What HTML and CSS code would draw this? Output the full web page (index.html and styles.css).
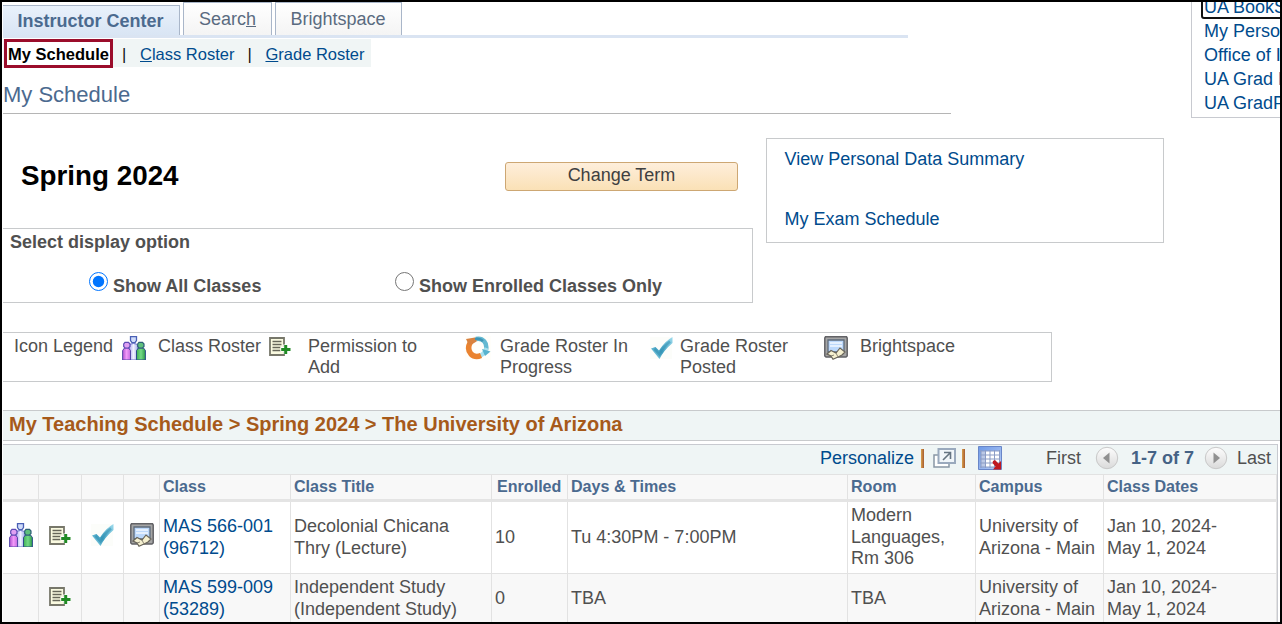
FILE: index.html
```html
<!DOCTYPE html>
<html lang="en">
<head>
    <meta charset="UTF-8">
    <meta name="viewport" content="width=device-width, initial-scale=1.0">
    <title>My Schedule</title>
    <link rel="stylesheet" href="styles.css">
</head>
<body>

<!-- Icon definitions -->
<svg class="defs" width="0" height="0">
    <defs>
        <linearGradient id="pink"><stop offset="0" stop-color="#b04fd0"/><stop offset=".5" stop-color="#f29af8"/><stop offset="1" stop-color="#c468e0"/></linearGradient>
        <linearGradient id="green"><stop offset="0" stop-color="#3fae55"/><stop offset=".5" stop-color="#74da86"/><stop offset="1" stop-color="#2d9a48"/></linearGradient>
        <linearGradient id="lilac"><stop offset="0" stop-color="#a9a4ee"/><stop offset=".5" stop-color="#f0f2ff"/><stop offset="1" stop-color="#a3abea"/></linearGradient>
        <linearGradient id="tick" x1="0" y1="1" x2="1" y2="0"><stop offset="0" stop-color="#9bdcee"/><stop offset=".4" stop-color="#3f9fc0"/><stop offset="1" stop-color="#9fdcee"/></linearGradient>
        <linearGradient id="gridfill" x1="0" y1="0" x2="1" y2="1"><stop offset="0" stop-color="#6e9ae8"/><stop offset="1" stop-color="#b9cdf5"/></linearGradient>
        <linearGradient id="ball" x1="0" y1="0" x2="0" y2="1"><stop offset="0" stop-color="#fdfdfd"/><stop offset="1" stop-color="#dadada"/></linearGradient>
    </defs>
    <symbol id="roster" viewBox="0 0 24 24">
        <path d="M7 24V10Q7.500 7.500 11.500 7.500Q15.500 7.500 16 10V24Z" fill="url(#lilac)" stroke="#6a72cc"/>
        <path d="M8.500 .6H14.500V4.500L13 6.700H10L8.500 4.500Z" fill="#d0dcfa" stroke="#4a60b5" stroke-width="1.300"/>
        <path d="M.6 24V14.500L2.500 12H6.500L8.500 14.500V24Z" fill="url(#pink)" stroke="#5548a8"/>
        <path d="M3 6.300H6.500L8 8V10.500L6.500 12H3L1.700 10.500V8Z" fill="#dfa0f2" stroke="#5e4bb5" stroke-width="1.200"/>
        <path d="M14.500 24V14.500L16.500 12H21.500L23.400 14.500V24Z" fill="url(#green)" stroke="#2c4d8b"/>
        <path d="M17 6.300H20.500L22 8V10.500L20.500 12H17L15.700 10.500V8Z" fill="#5fc07c" stroke="#2e5f77" stroke-width="1.200"/>
    </symbol>
    <symbol id="permission" viewBox="0 0 22 19">
        <path d="M1 1H15V18H1Z" fill="#fafae0" stroke="#77776a" stroke-width="1.800"/>
        <path d="M3.500 4.500H12.500M3.500 7.500H12.500M3.500 10.500H11.500M3.500 13.500H11.500" stroke="#666659" stroke-width="1.500"/>
        <path d="M16.500 7.500V17M11.500 12.200H21.500" stroke="#fff" stroke-width="4.500"/>
        <path d="M16.700 8V17M12.200 12.500H21.500" stroke="#218a25" stroke-width="3"/>
    </symbol>
    <symbol id="progress" viewBox="0 0 26 24">
        <path d="M0 0H26V24H0Z" fill="#fffefa"/>
        <path d="M11 3C18 1.500 22.500 7 21 14" fill="none" stroke="#64b9d2" stroke-width="4.500"/>
        <path d="M21.500 12Q19 19.500 12.500 20.500" fill="none" stroke="#a6e0ee" stroke-width="4"/>
        <path d="M17 13L25.500 15.500L20 20Z" fill="#58b3ce"/>
        <path d="M5.500 6Q1.500 13 6 18Q10 22 16 19.500" fill="none" stroke="#ea8330" stroke-width="5.500"/>
        <path d="M1 3L10 1.500Q12.500 2 11.500 5.500L7.500 8L4 9Z" fill="#d9823f"/>
        <path d="M10 3Q15 2 18 5" fill="none" stroke="#3f95b5" stroke-width="2.500"/>
    </symbol>
    <symbol id="posted" viewBox="0 0 24 24">
        <path d="M0 1H22V23H0Z" fill="#fcfdfa"/>
        <path d="M1 12.500L5.500 11L9 14.500Q15 5 22.500 1V7Q14 14 9.500 23Z" fill="url(#tick)"/>
        <path d="M4.500 13L9.500 18.500Q13 11 20 5.500" fill="none" stroke="#2d8bad" stroke-width="2.500" opacity=".5"/>
    </symbol>
    <symbol id="bright" viewBox="0 0 24 24">
        <path d="M1.500 .8H22.500L23.200 2V20L22 21H2L.8 20V2Z" fill="#a5a5a5" stroke="#626266" stroke-width="1.500"/>
        <path d="M4 4H20V16H4Z" fill="#bcd8fb" stroke="#5d6b7b" stroke-width="1.300"/>
        <path d="M6 7H18M6 10H18" stroke="#f2f8ff" stroke-width="1.500"/>
        <path d="M3 18L7 14.500L12 17L16 12L21 16L18 19L14 21L9 23.200L7 20Z" fill="#f5f0d0" stroke="#68645a" stroke-width="1.200"/>
        <path d="M12 17L14 21M7 20L10 19" stroke="#8c8776" fill="none"/>
    </symbol>
    <symbol id="prev" viewBox="0 0 24 24">
        <circle cx="12" cy="12" r="10.700" fill="url(#ball)" stroke="#c8c8c8"/>
        <path d="M14.500 6.500V17.500L8 12Z" fill="#909090"/>
    </symbol>
    <symbol id="next" viewBox="0 0 24 24">
        <circle cx="12" cy="12" r="10.700" fill="url(#ball)" stroke="#c8c8c8"/>
        <path d="M9.500 6.500V17.500L16 12Z" fill="#909090"/>
    </symbol>
</svg>

<div class="page">
    <div class="top">
        <div class="top-left">
            <div class="tabs">
                <div class="tab active">Instructor Center</div>
                <div class="tab search">Searc<u>h</u></div>
                <div class="tab bspace">Brightspace</div>
            </div>
            <div class="subnav">
                <span class="current">My Schedule</span>
                <span class="sep">|</span>
                <a><u>C</u>lass Roster</a>
                <span class="sep">|</span>
                <a><u>G</u>rade Roster</a>
            </div>
            <h1>My Schedule</h1>
        </div>
        <div class="links">
            <a class="focused">UA BookS</a>
            <a>My Perso</a>
            <a>Office of I</a>
            <a>UA Grad P</a>
            <a>UA GradP</a>
        </div>
    </div>

    <div class="middle">
        <div class="term-area">
            <div class="term-row">
                <h2>Spring 2024</h2>
                <button class="change">Change Term</button>
            </div>
            <div class="options">
                <div class="options-title">Select display option</div>
                <div class="radios">
                    <label><input type="radio" name="show" checked><span>Show All Classes</span></label>
                    <label><input type="radio" name="show"><span>Show Enrolled Classes Only</span></label>
                </div>
            </div>
        </div>
        <div class="side-box">
            <a>View Personal Data Summary</a>
            <a>My Exam Schedule</a>
        </div>
    </div>

    <div class="legend">
        <span class="legend-title">Icon Legend</span>
        <svg class="icon"><use href="#roster"/></svg>
        <span class="l-roster">Class Roster</span>
        <svg class="icon-small"><use href="#permission"/></svg>
        <span class="l-permission">Permission to Add</span>
        <svg class="icon-wide"><use href="#progress"/></svg>
        <span class="l-progress">Grade Roster In Progress</span>
        <svg class="icon"><use href="#posted"/></svg>
        <span class="l-posted">Grade Roster Posted</span>
        <svg class="icon"><use href="#bright"/></svg>
        <span class="l-bright">Brightspace</span>
    </div>

    <div class="section-title">My Teaching Schedule &gt; Spring 2024 &gt; The University of Arizona</div>

    <div class="schedule">
        <div class="toolbar">
            <a>Personalize</a>
            <i class="bar"></i>
            <svg class="popout" width="23" height="20" viewBox="0 0 23 20">
                <path d="M5 7H1V19H16V15" fill="#fff" stroke="#8996a5" stroke-width="1.500"/>
                <path d="M5.500 1H22V15H5.500Z" fill="#f1f6fa" stroke="#9aa9bd" stroke-width="2"/>
                <path d="M10 12L17 5M11 4.500H17.500V11" fill="none" stroke="#657482" stroke-width="1.600"/>
            </svg>
            <i class="bar"></i>
            <svg class="download" width="24" height="24" viewBox="0 0 24 24">
                <path d="M.5 .5H23.500V23.500H.5Z" fill="url(#gridfill)" stroke="#6986c8"/>
                <path d="M3 5H22V21H3Z" fill="#fff"/>
                <path d="M3 5H7V21H3Z" fill="#bcc9e5"/>
                <path d="M2 5H22M2 9H22M2 13H22M2 17H22M2 21H22M3 4V22M7.500 4V22M12 4V22M16.500 4V22M21.500 4V22" stroke="#8b9cc5"/>
                <path d="M15 15L17 14L20.500 17.500L23 15V23.500H15L17.500 20.500L14.500 17Z" fill="#c01820"/>
            </svg>
            <span class="first">First</span>
            <svg class="icon"><use href="#prev"/></svg>
            <b>1-7 of 7</b>
            <svg class="icon"><use href="#next"/></svg>
            <span class="last">Last</span>
        </div>
        <table>
            <colgroup>
                <col class="c1"><col class="c2"><col class="c3"><col class="c4"><col class="c5"><col class="c6">
                <col class="c7"><col class="c8"><col class="c9"><col class="c10"><col class="c11">
            </colgroup>
            <tr class="head">
                <th></th><th></th><th></th><th></th>
                <th>Class</th>
                <th>Class Title</th>
                <th class="enr">Enrolled</th>
                <th>Days &amp; Times</th>
                <th>Room</th>
                <th>Campus</th>
                <th>Class Dates</th>
            </tr>
            <tr class="row1">
                <td class="ic"><svg class="icon"><use href="#roster"/></svg></td>
                <td class="ic"><svg class="icon-small"><use href="#permission"/></svg></td>
                <td class="ic"><svg class="icon"><use href="#posted"/></svg></td>
                <td class="ic"><svg class="icon"><use href="#bright"/></svg></td>
                <td><a>MAS 566-001<br>(96712)</a></td>
                <td>Decolonial Chicana<br>Thry (Lecture)</td>
                <td>10</td>
                <td>Tu 4:30PM - 7:00PM</td>
                <td>Modern<br>Languages,<br>Rm 306</td>
                <td>University of<br>Arizona - Main</td>
                <td>Jan 10, 2024-<br>May 1, 2024</td>
            </tr>
            <tr class="row2">
                <td></td>
                <td class="ic"><svg class="icon-small"><use href="#permission"/></svg></td>
                <td></td>
                <td></td>
                <td><a>MAS 599-009<br>(53289)</a></td>
                <td>Independent Study<br>(Independent Study)</td>
                <td>0</td>
                <td>TBA</td>
                <td>TBA</td>
                <td>University of<br>Arizona - Main</td>
                <td>Jan 10, 2024-<br>May 1, 2024</td>
            </tr>
        </table>
    </div>
</div>

</body>
</html>
```
FILE: styles.css
```css
* {
    box-sizing: border-box;
}
body {
    margin: 0;
    font-family: "Liberation Sans", Arial, sans-serif;
    font-size: 18px;
    color: #505050;
    background-color: #fff;
}
.defs {
    display: block;
}
.page {
    width: 1282px;
    height: 624px;
    border: 2px solid #000;
    padding-left: 1px;
    overflow: hidden;
}
a {
    color: #004b8d;
}
.icon, .icon-small, .icon-wide {
    display: block;
    flex: none;
    width: 24px;
    height: 24px;
}
.icon-small {
    width: 22px;
    height: 19px;
}
.icon-wide {
    width: 26px;
}

/* Tabs and page title */
.top {
    display: flex;
    justify-content: space-between;
    height: 116px;
}
.tabs {
    display: flex;
    align-items: flex-end;
    width: 905px;
    height: 36px;
    border-bottom: 3px solid #dae4f2;
}
.tab {
    height: 33px;
    line-height: 32px;
    border: 1px solid #a9b6c9;
    border-bottom: none;
    background: linear-gradient(#fff, #f4f4f4);
    color: #5a6b80;
    text-align: center;
}
.tab.active {
    width: 177px;
    height: 30px;
    line-height: 31px;
    border-left: none;
    padding-right: 1px;
    background: linear-gradient(#e9f1fb, #d9e5f4);
    color: #4b6a8f;
    font-weight: bold;
}
.search {
    width: 89px;
    margin: 0 3px;
}
.bspace {
    width: 127px;
    padding-right: 1px;
}
.subnav {
    display: flex;
    width: 368px;
    height: 28px;
    margin-top: 1px;
    padding-left: 1px;
    background-color: #f0f5f5;
    font-size: 16.5px;
    line-height: 31px;
}
.current {
    width: 109px;
    height: 29px;
    line-height: 25px;
    border: 3px solid #9b0d2b;
    background-color: #fff;
    color: #000;
    font-weight: bold;
    text-align: center;
    white-space: nowrap;
}
.sep {
    width: 27px;
    padding-left: 9px;
    color: #111;
}
.sep + a + .sep {
    width: 31px;
    padding-left: 13px;
}
h1 {
    width: 948px;
    height: 47px;
    margin: 0;
    border-bottom: 1px solid #b5b5b5;
    color: #4b6a8f;
    font-size: 22px;
    font-weight: normal;
    line-height: 55px;
}
.links {
    display: flex;
    flex-direction: column;
    justify-content: flex-end;
    width: 89px;
    padding: 0 0 2px 12px;
    border-left: 1px solid #c8cad0;
    border-bottom: 1px solid #c8cad0;
    white-space: nowrap;
}
.links a {
    height: 24px;
    flex: none;
    line-height: 24px;
}
.links .focused {
    width: 90px;
    margin-left: -3px;
    padding-left: 1px;
    border: 2px solid #111;
    border-radius: 3px;
    line-height: 20px;
}

/* Term selection */
.middle {
    display: flex;
    align-items: flex-start;
    margin-top: 20px;
}
.term-area {
    width: 750px;
    margin-right: 13px;
}
.term-row {
    display: flex;
    height: 90px;
    padding: 24px 15px 0 18px;
    justify-content: space-between;
}
h2 {
    margin: 0;
    color: #000;
    font-size: 27.8px;
    line-height: 28px;
}
.change {
    width: 233px;
    height: 29px;
    padding: 0 0 3px;
    border: 1px solid #cda773;
    border-radius: 3px;
    background: linear-gradient(#feeedb, #fae1b6);
    color: #404040;
    font: 18px "Liberation Sans", Arial, sans-serif;
}
.options {
    height: 75px;
    border: 1px solid #c8cacc;
    border-left: none;
    font-weight: bold;
}
.options-title {
    padding-left: 7px;
    line-height: 27px;
}
.radios {
    display: flex;
    padding: 15px 0 0 86px;
}
.radios label {
    display: flex;
    width: 306px;
    line-height: 24px;
    white-space: nowrap;
}
.radios span {
    padding-top: 3px;
}
.radios input {
    width: 19px;
    height: 19px;
    margin: 1px 5px 0 0;
}
.side-box {
    display: flex;
    flex-direction: column;
    gap: 36px;
    width: 398px;
    height: 105px;
    padding: 8px 17.5px;
    border: 1px solid #c8cacc;
    line-height: 24px;
}

/* Icon legend */
.legend {
    display: flex;
    align-items: flex-start;
    width: 1049px;
    height: 50px;
    margin-top: 29px;
    padding: 3px 0 0 11px;
    border: 1px solid #c8cacc;
    border-left: none;
    line-height: 21px;
}
.legend span {
    flex: none;
}
.legend-title {
    width: 108px;
}
.legend .icon-small {
    margin-top: 1px;
}
.l-roster {
    width: 123px;
    padding-left: 12px;
}
.l-permission {
    width: 174px;
    padding: 0 40px 0 17px;
}
.l-progress {
    width: 159px;
    padding: 0 20px 0 9px;
}
.l-posted {
    width: 150px;
    padding: 0 30px 0 6px;
}
.l-bright {
    padding-left: 12px;
}

/* Schedule grid */
.section-title {
    height: 31px;
    margin-top: 28px;
    padding-left: 6px;
    border-top: 1px solid #c8cacc;
    border-bottom: 1px solid #c8cacc;
    background-color: #eff5f5;
    color: #a65a1a;
    font-size: 20px;
    font-weight: bold;
    line-height: 27px;
}
.schedule {
    width: 1275px;
    margin-top: 3px;
    border: 1px solid #c8cad0;
    border-left: none;
}
.toolbar {
    display: flex;
    align-items: center;
    justify-content: flex-end;
    height: 29px;
    padding: 0 6px 3px 0;
    background-color: #eff5f5;
}
.bar {
    width: 3px;
    height: 19px;
    margin-left: 7px;
    background: linear-gradient(90deg, #d9a04e, #a35a30);
}
.popout {
    margin-left: 9px;
}
.download {
    margin-left: 13px;
}
.bar + .popout + .bar {
    margin-left: 6px;
}
.first {
    margin: 0 14px 0 44px;
}
.toolbar b {
    margin: 0 10px 0 12px;
    color: #456285;
}
.last {
    margin-left: 9px;
}
table {
    width: 1274px;
    table-layout: fixed;
    border-collapse: separate;
    border-spacing: 0;
}
.c1 { width: 36px; }
.c2 { width: 43px; }
.c3 { width: 42px; }
.c4 { width: 36px; }
.c5 { width: 131px; }
.c6 { width: 201px; }
.c7 { width: 76px; }
.c8 { width: 280px; }
.c9 { width: 128px; }
.c10 { width: 128px; }
.c11 { width: 173px; }
th, td {
    padding: 0 0 0 3px;
    border-right: 1px solid #e2e2e2;
    text-align: left;
    white-space: nowrap;
}
.head th {
    height: 28px;
    padding-bottom: 1px;
    border-top: 1px solid #e2e2e2;
    border-bottom: 3px solid #e4e4e4;
    background-color: #f8f8f8;
    color: #4b6a8f;
    font-size: 16.1px;
}
.head .enr {
    padding-left: 5px;
}
td {
    line-height: 21.7px;
    border-bottom: 1px solid #e2e2e2;
}
.row1 td {
    height: 72px;
}
.row2 td {
    height: 50px;
    background-color: #f8f8f8;
}
td.ic {
    padding: 0;
}
td.ic svg {
    margin: 0 auto;
}
.row1 td.ic {
    padding-bottom: 5px;
}
.row2 td.ic {
    padding-bottom: 5px;
}
```
